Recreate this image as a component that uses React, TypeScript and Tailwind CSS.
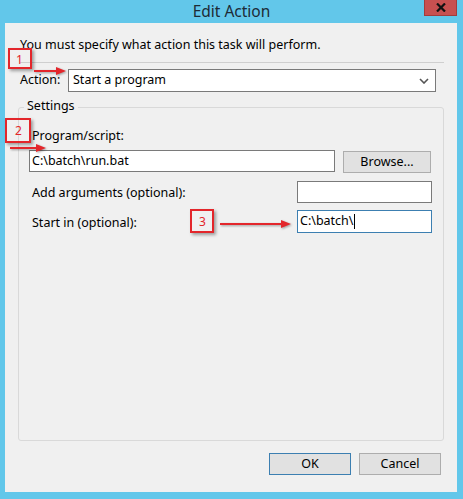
import React from "react";

const RedBox = ({ className, num, numClass }: { className: string; num: string; numClass: string }) => (
  <div
    className={`absolute border-2 border-[#e3262b] shadow-[2px_2px_3px_rgba(0,0,0,0.35)] ${className}`}
  >
    <span className={`absolute text-[12px] leading-none text-[#e3262b] ${numClass}`}>{num}</span>
  </div>
);

const Arrow = ({ x, y, w }: { x: number; y: number; w: number }) => (
  <svg
    className="absolute drop-shadow-[1px_1px_1px_rgba(0,0,0,0.35)]"
    style={{ left: x, top: y - 5, width: w, height: 10 }}
    viewBox={`0 0 ${w} 10`}
  >
    <line x1="0" y1="5" x2={w - 8} y2="5" stroke="#e3262b" strokeWidth="2" />
    <polygon points={`${w - 10},1 ${w},5 ${w - 10},9`} fill="#e3262b" />
  </svg>
);

export default function App() {
  return (
    <div
      className="relative w-[463px] h-[499px] bg-[#62c7ea] overflow-hidden text-[12.5px] text-black"
      style={{ fontFamily: '"Noto Sans", "Open Sans", sans-serif' }}
    >
      {/* Title bar */}
      <div className="h-[23px] flex items-center justify-center">
        <span className="text-[15.5px] text-[#1d2b36] leading-none">Edit Action</span>
      </div>
      <div className="absolute left-[424px] top-0 w-[33px] h-[16px] bg-[#c75050] border border-t-0 border-[#a33c3c] flex items-center justify-center">
        <svg width="10" height="9" viewBox="0 0 10 9">
          <path d="M1 0.5 L9 8.5 M9 0.5 L1 8.5" stroke="#111" strokeWidth="2.2" />
        </svg>
      </div>

      {/* Client area */}
      <div className="ml-[5px] w-[452px] h-[469px] bg-[#f0f0f0] flex flex-col pt-[14px]">
        <div className="pl-[15px] leading-[16px]">You must specify what action this task will perform.</div>
        <div className="ml-[15px] w-[424px] mt-[9px] border-t border-[#cfcfcf]" />
        <div className="flex items-center mt-[6px] ml-[15px]">
          <span className="w-[48px]">Action:</span>
          <div className="w-[368px] h-[23px] bg-white border border-[#7a7a7a] flex items-center justify-between pl-[4px] pr-[6px]">
            <span>Start a program</span>
            <svg width="10" height="6" viewBox="0 0 10 6">
              <polyline points="1,1 5,5 9,1" fill="none" stroke="#555" strokeWidth="1.6" />
            </svg>
          </div>
        </div>

        {/* Settings group */}
        <div className="relative mt-[15px] ml-[13px] w-[426px] h-[334px] border border-[#d9d9d9] rounded-[3px] pl-[10px] pr-[11px] pt-[20px] flex flex-col">
          <span className="absolute -top-[10px] left-[5px] bg-[#f0f0f0] px-[3px] leading-[16px]">Settings</span>
          <div className="leading-[16px] pl-[3px]">Program/script:</div>
          <div className="flex mt-[6px]">
            <div className="w-[306px] h-[22px] bg-white border border-[#7a7a7a] flex items-center pl-[2px]">C:\batch\run.bat</div>
            <div className="ml-[8px] mt-[1px] w-[88px] h-[22px] bg-[#e1e1e1] border border-[#adadad] flex items-center justify-center">Browse...</div>
          </div>
          <div className="flex items-center justify-between mt-[8px]">
            <span className="pl-[3px] mt-[2px]">Add arguments (optional):</span>
            <div className="w-[135px] h-[22px] bg-white border border-[#7a7a7a]" />
          </div>
          <div className="flex items-center justify-between mt-[7px]">
            <span className="pl-[3px] mt-[3px]">Start in (optional):</span>
            <div className="w-[135px] h-[23px] bg-white border border-[#3c7fb1] flex items-center pl-[2px]">
              <span>C:\batch\</span>
              <span className="inline-block w-px h-[15px] bg-black" />
            </div>
          </div>
        </div>

        {/* Buttons */}
        <div className="flex justify-end gap-[8px] mt-[12px] pr-[16px]">
          <div className="w-[82px] h-[22px] bg-[#e1e1e1] border border-[#3c7fb1] flex items-center justify-center">OK</div>
          <div className="w-[82px] h-[22px] bg-[#e1e1e1] border border-[#adadad] flex items-center justify-center">Cancel</div>
        </div>
      </div>

      {/* Annotations */}
      <RedBox className="left-[8px] top-[48px] w-[24px] h-[21px]" num="1" numClass="left-[6px] top-[4px]" />
      <Arrow x={34} y={71} w={32} />
      <RedBox className="left-[5px] top-[118px] w-[26px] h-[25px]" num="2" numClass="left-[8px] top-[5px]" />
      <Arrow x={10} y={148} w={36} />
      <RedBox className="left-[190px] top-[209px] w-[24px] h-[24px]" num="3" numClass="left-[7px] top-[5px]" />
      <Arrow x={220} y={224} w={71} />
    </div>
  );
}
